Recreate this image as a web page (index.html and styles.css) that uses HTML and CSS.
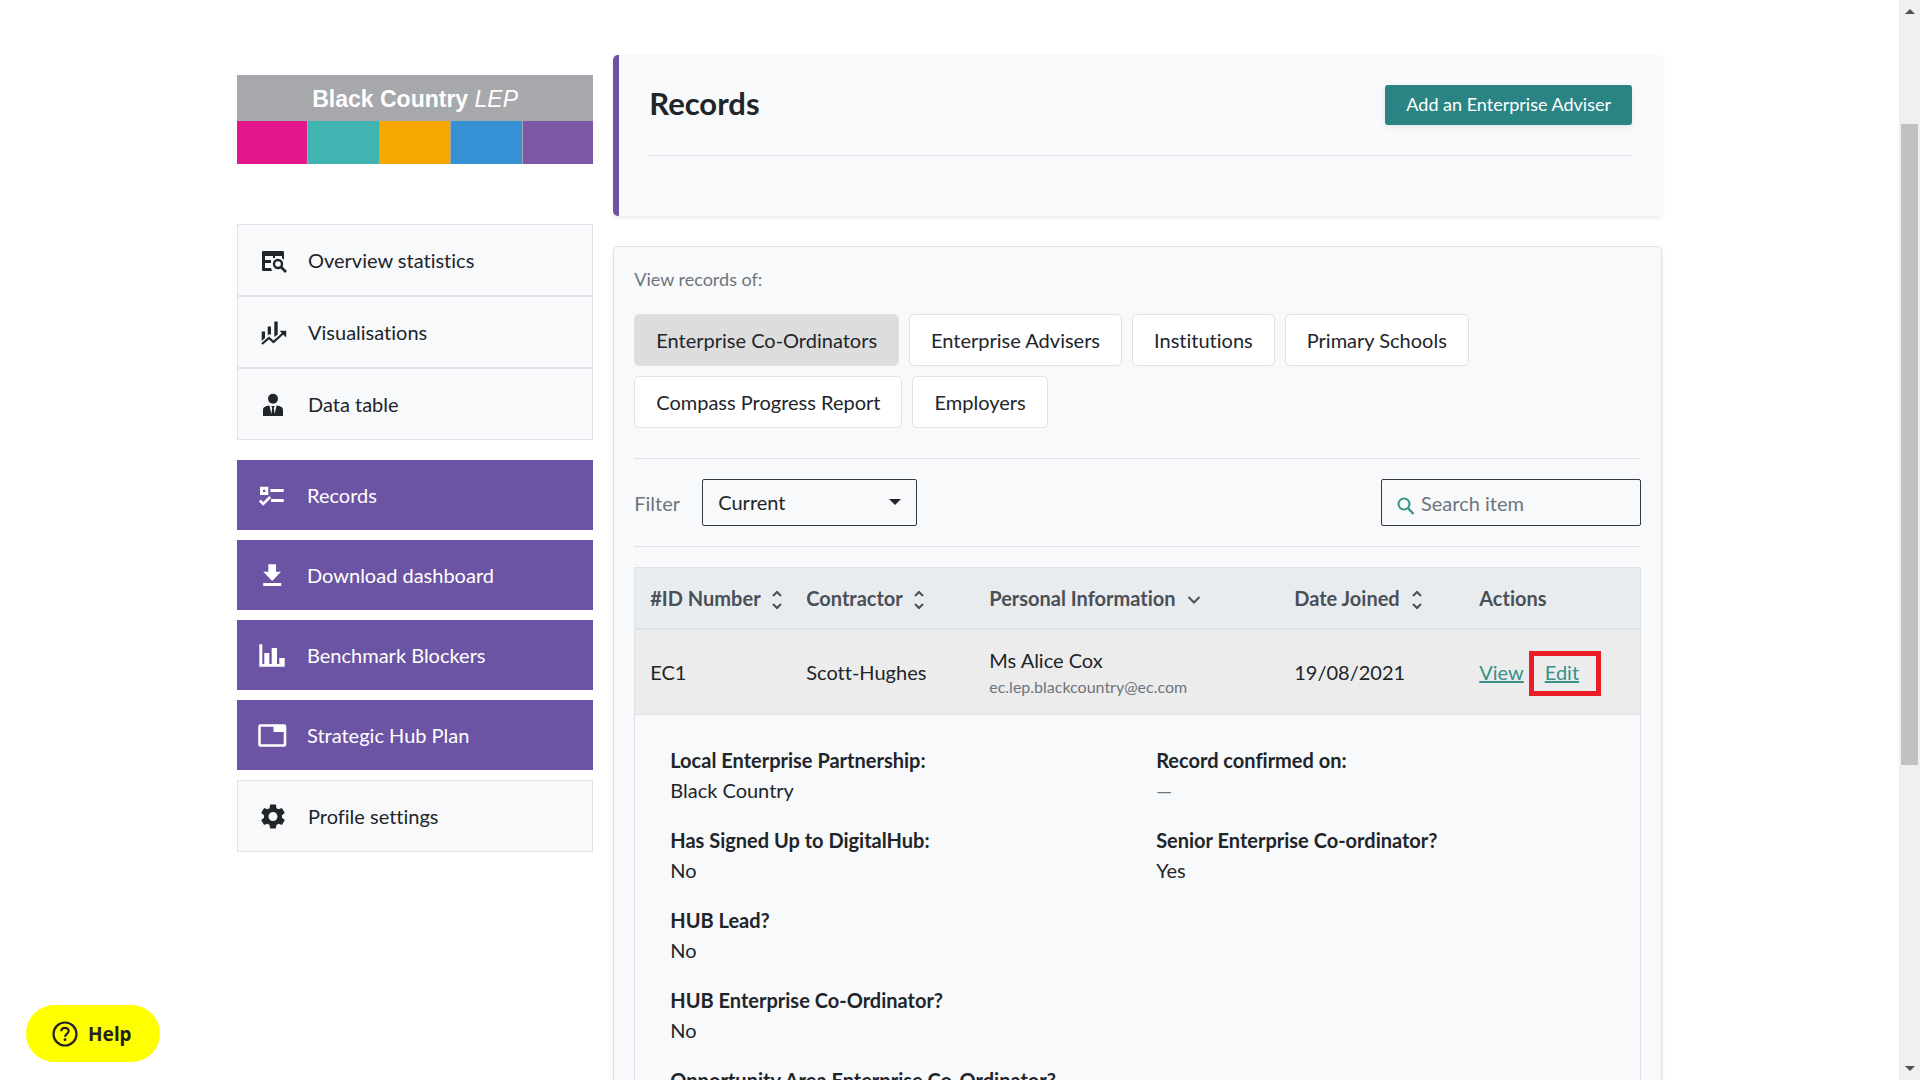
FILE: index.html
```html
<!DOCTYPE html>
<html lang="en">
<head>
  <meta charset="utf-8">
  <title>Records</title>
  <link rel="stylesheet" href="styles.css">
</head>
<body>
  <div class="viewport">
    <div class="container">

      <aside class="sidebar">
        <div class="logo">
          <div class="logo-name"><b>Black Country</b> <i>LEP</i></div>
          <div class="logo-colours">
            <span class="pink"></span>
            <span class="teal"></span>
            <span class="orange"></span>
            <span class="blue"></span>
            <span class="purple"></span>
          </div>
        </div>

        <nav>
          <div class="nav-group">
            <a class="nav-item" href="#">
              <svg class="icon" viewBox="0 0 28 28"><path fill="currentColor" d="M3 5h20a1 1 0 0 1 1 1v8l-2-2v-2h-7v2h-2v-2H5v4h6v3H5v5h6l1 3H3a1 1 0 0 1-1-1V6a1 1 0 0 1 1-1z"/><circle cx="18" cy="18" r="4" fill="none" stroke="currentColor" stroke-width="2.4"/><path stroke="currentColor" stroke-width="2.6" d="M21 21l5 5"/></svg>
              Overview statistics
            </a>
            <a class="nav-item" href="#">
              <svg class="icon" viewBox="0 0 28 28"><path fill="currentColor" d="M1.700 13.500H5V20l-3.300 3zM7.700 8.500H11V17l-1.800-1-1.500 1.500zM14.300 3.500h3.400v13L14.300 19zM19.500 12.800h6.700v6.700z"/><path fill="none" stroke="currentColor" stroke-width="2.200" d="M2 26l7-6 4.500 4L23.500 15"/></svg>
              Visualisations
            </a>
            <a class="nav-item" href="#">
              <svg class="icon" viewBox="0 0 28 28"><circle cx="13" cy="8.700" r="5" fill="currentColor"/><path fill="currentColor" d="M3 26v-6c0-2.500 2-4 6.500-4.500L11.300 24 12.200 18l-1-2h3.600l-1 2 .9 6 1.800-8.500C21 16 23 17.500 23 20v6z"/></svg>
              Data table
            </a>
          </div>

          <a class="nav-item primary" href="#">
            <svg class="icon" viewBox="0 0 28 28"><path fill="currentColor" fill-rule="evenodd" d="M1 5.700h8.300V14H1zM4 8.700V11h2.300V8.700zM11.500 8h13.200v3H11.500zM12 18h12.700v3H12z"/><path fill="none" stroke="currentColor" stroke-width="2.600" d="M.8 19.500L4.200 23l7-7"/></svg>
            Records
          </a>
          <a class="nav-item primary" href="#">
            <svg class="icon" viewBox="0 0 28 28"><path fill="currentColor" d="M9.300 3.300H17v7.400h5L13.200 20l-9-9.300h5.100zM4.200 22h18v3h-18z"/></svg>
            Download dashboard
          </a>
          <a class="nav-item primary" href="#">
            <svg class="icon" viewBox="0 0 28 28"><path fill="currentColor" d="M.3 3.300h3V23h2V12h5v11h2.400V7H18v16h2.300v-6h5.400v8.700H.3z"/></svg>
            Benchmark Blockers
          </a>
          <a class="nav-item primary" href="#">
            <svg class="icon" viewBox="0 0 28 28"><rect x="0.500" y="4.500" width="25.500" height="20" rx="1" fill="none" stroke="currentColor" stroke-width="2.600"/><path fill="currentColor" d="M14.500 4H26v7H14.500z"/></svg>
            Strategic Hub Plan
          </a>
          <a class="nav-item" href="#">
            <svg class="icon" viewBox="0 0 28 28"><path transform="translate(-2 -.5) scale(1.25)" fill="currentColor" d="M19.140 12.940c.04-.3.060-.61.060-.94 0-.32-.02-.64-.07-.94l2.030-1.580c.18-.14.23-.41.12-.61l-1.920-3.320c-.12-.22-.37-.29-.59-.22l-2.390.96c-.5-.38-1.030-.7-1.620-.94L14.400 2.810c-.04-.24-.24-.41-.48-.41h-3.840c-.24 0-.43.17-.47.41l-.36 2.540c-.59.24-1.130.57-1.620.94l-2.390-.96c-.22-.08-.47 0-.59.220L2.740 8.870c-.12.21-.08.47.12.610l2.030 1.580c-.05.3-.09.63-.09.940s.02.64.07.940l-2.030 1.580c-.18.14-.23.41-.12.610l1.920 3.320c.12.22.37.29.59.220l2.390-.96c.5.38 1.030.7 1.620.940l.36 2.540c.05.24.24.41.48.410h3.840c.24 0 .44-.17.47-.41l.36-2.540c.59-.24 1.130-.56 1.620-.94l2.390.96c.22.08.47 0 .59-.22l1.920-3.320c.12-.22.07-.47-.12-.61l-2.010-1.580zM12 15.600c-1.980 0-3.600-1.620-3.600-3.600s1.620-3.600 3.600-3.600 3.600 1.620 3.600 3.600-1.620 3.600-3.600 3.600z"/></svg>
            Profile settings
          </a>
        </nav>
      </aside>

      <main>
        <header class="page-header">
          <div class="page-title">
            <h1>Records</h1>
            <button type="button" class="btn-add">Add an Enterprise Adviser</button>
          </div>
        </header>

        <section class="panel">
          <p class="panel-label">View records of:</p>
          <div class="tabs">
            <button type="button" class="tab active">Enterprise Co-Ordinators</button>
            <button type="button" class="tab">Enterprise Advisers</button>
            <button type="button" class="tab">Institutions</button>
            <button type="button" class="tab">Primary Schools</button>
            <button type="button" class="tab">Compass Progress Report</button>
            <button type="button" class="tab">Employers</button>
          </div>

          <div class="toolbar">
            <label for="filter">Filter</label>
            <div class="select-wrap">
              <select id="filter">
                <option>Current</option>
                <option>Archived</option>
              </select>
            </div>
            <div class="search">
              <svg viewBox="0 0 18 18" aria-hidden="true"><circle cx="7" cy="7" r="5.500" fill="none" stroke="currentColor" stroke-width="2"/><path stroke="currentColor" stroke-width="2.200" d="M11 11l5.500 6"/></svg>
              <input type="search" placeholder="Search item" aria-label="Search item">
            </div>
          </div>

          <table class="records">
            <thead>
              <tr>
                <th class="col-id">#ID Number <svg class="sort" viewBox="0 0 10 20"><path d="M1 6l4-4 4 4M1 14l4 4 4-4"/></svg></th>
                <th class="col-contractor">Contractor <svg class="sort" viewBox="0 0 10 20"><path d="M1 6l4-4 4 4M1 14l4 4 4-4"/></svg></th>
                <th class="col-personal">Personal Information <svg class="sort down" viewBox="0 0 14 20"><path d="M1.500 7L7 12.500 12.500 7"/></svg></th>
                <th class="col-date">Date Joined <svg class="sort" viewBox="0 0 10 20"><path d="M1 6l4-4 4 4M1 14l4 4 4-4"/></svg></th>
                <th>Actions</th>
              </tr>
            </thead>
            <tbody>
              <tr class="record">
                <td>EC1</td>
                <td>Scott-Hughes</td>
                <td>Ms Alice Cox<small>ec.lep.blackcountry@ec.com</small></td>
                <td>19/08/2021</td>
                <td>
                  <div class="actions">
                    <a href="#">View</a>
                    <a href="#" class="highlight">Edit</a>
                  </div>
                </td>
              </tr>
              <tr>
                <td colspan="5" class="details">
                  <div class="details-columns">
                    <dl>
                      <dt>Local Enterprise Partnership:</dt>
                      <dd>Black Country</dd>
                      <dt>Has Signed Up to DigitalHub:</dt>
                      <dd>No</dd>
                      <dt>HUB Lead?</dt>
                      <dd>No</dd>
                      <dt>HUB Enterprise Co-Ordinator?</dt>
                      <dd>No</dd>
                      <dt>Opportunity Area Enterprise Co-Ordinator?</dt>
                      <dd>No</dd>
                    </dl>
                    <dl>
                      <dt>Record confirmed on:</dt>
                      <dd class="empty">—</dd>
                      <dt>Senior Enterprise Co-ordinator?</dt>
                      <dd>Yes</dd>
                    </dl>
                  </div>
                </td>
              </tr>
            </tbody>
          </table>
        </section>
      </main>

    </div>
  </div>

  <div class="scrollbar" aria-hidden="true">
    <span class="arrow up"></span>
    <div class="track"><div class="thumb"></div></div>
    <span class="arrow down"></span>
  </div>

  <button type="button" class="help">
    <svg viewBox="0 0 26 26"><circle cx="13" cy="13" r="11.500" fill="none" stroke="currentColor" stroke-width="2.200"/><path fill="none" stroke="currentColor" stroke-width="2.200" d="M9.300 10.300c0-4.700 7.400-4.500 7.400-.3 0 2.700-3.700 2.900-3.700 5.800"/><circle cx="13" cy="18.700" r="1.400" fill="currentColor"/></svg>
    Help
  </button>
</body>
</html>
```
FILE: styles.css
```css
* {
  box-sizing: border-box;
}

body {
  display: flex;
  height: 100vh;
  margin: 0;
  overflow: hidden;
  background: #fff;
  color: #212529;
  font-family: Lato, "Liberation Sans", sans-serif;
  font-size: 20px;
  font-variant-ligatures: none;
  line-height: 30px;
}

button,
input,
select {
  font: inherit;
  font-variant-ligatures: none;
  color: inherit;
}

.viewport {
  flex: 1;
  overflow: hidden;
}

.container {
  display: flex;
  gap: 20px;
  max-width: 1425px;
  margin: 0 auto;
  padding-top: 55px;
}

/* Sidebar */

.sidebar {
  flex: 0 0 25%;
  padding-top: 20px;
}

.logo {
  margin-bottom: 60px;
  background: #a7a8ac;
}

.logo-name {
  height: 46px;
  color: #fff;
  font-family: "Liberation Sans", Arial, sans-serif;
  font-size: 23px;
  line-height: 48px;
  text-align: center;
}

.logo-colours {
  display: flex;
  gap: 1px;
  height: 43px;
}

.logo-colours span {
  flex: 1;
}

.pink {
  background: #e4168b;
}

.teal {
  background: #40b4b0;
}

.orange {
  background: #f6a800;
}

.blue {
  background: #3591d3;
}

.purple {
  background: #7d58a6;
}

.nav-group {
  margin-bottom: 20px;
}

.nav-item {
  display: flex;
  align-items: center;
  gap: 20px;
  height: 72px;
  padding: 0 22px;
  border: 1px solid #dee2e6;
  background: #f8f9fb;
  color: #212529;
  text-decoration: none;
}

.nav-item.primary {
  height: 70px;
  margin-bottom: 10px;
  border: 0;
  background: #6b54a3;
  color: #fff;
}

.icon {
  width: 28px;
  height: 28px;
  overflow: visible;
}

/* Main column */

main {
  flex: 1;
  min-width: 0;
}

.page-header {
  margin-bottom: 30px;
  padding: 0 30px 60px;
  border-left: 6px solid #6b54a3;
  border-radius: 5px;
  background: #f8f9fb;
  box-shadow: 0 2px 5px rgba(0, 0, 0, 0.08);
}

.page-title {
  display: flex;
  align-items: flex-start;
  justify-content: space-between;
  padding: 30px 0;
  border-bottom: 1px solid #dee2e6;
}

h1 {
  margin: 0;
  font-size: 31px;
  font-weight: 700;
  line-height: 36px;
}

.btn-add {
  height: 40px;
  padding: 0 21px 2px;
  border: 0;
  border-radius: 3px;
  background: #2b8484;
  color: #fff;
  font-size: 18px;
  box-shadow: 0 2px 5px rgba(0, 0, 0, 0.08);
}

.panel {
  padding: 20px;
  border: 1px solid #dee2e6;
  border-radius: 5px;
  background: #f8f9fb;
  box-shadow: 0 2px 5px rgba(0, 0, 0, 0.08);
}

.panel-label {
  margin: 0 0 22px;
  color: #6c757d;
  font-size: 18px;
  line-height: 25px;
}

.tabs {
  display: flex;
  flex-wrap: wrap;
  gap: 10px;
  max-width: 900px;
  margin-bottom: 30px;
}

.tab {
  height: 52px;
  padding: 0 21px;
  border: 1px solid #dee2e6;
  border-radius: 5px;
  background: #fff;
}

.tab.active {
  background: #ddd;
}

.toolbar {
  display: flex;
  align-items: center;
  margin-bottom: 20px;
  padding: 20px 0;
  border-top: 1px solid #dee2e6;
  border-bottom: 1px solid #dee2e6;
  color: #6c757d;
}

.toolbar label {
  width: 48px;
}

.select-wrap {
  position: relative;
  margin-left: 20px;
  color: #212529;
}

.select-wrap::after {
  content: "";
  position: absolute;
  top: 20px;
  right: 16px;
  border: 6px solid transparent;
  border-top-color: #212529;
  border-bottom: 0;
  pointer-events: none;
}

select {
  display: block;
  width: 215px;
  height: 47px;
  padding: 0 15px 2px;
  border: 1px solid #343a40;
  border-radius: 2px;
  background: transparent;
  appearance: none;
}

.search {
  display: flex;
  align-items: center;
  gap: 6px;
  width: 260px;
  height: 47px;
  margin-left: auto;
  padding: 0 15px;
  border: 1px solid #343a40;
  border-radius: 2px;
}

.search svg {
  flex: none;
  width: 18px;
  height: 18px;
  margin-top: 6px;
  color: #36918a;
}

.search input {
  width: 100%;
  padding: 0;
  border: 0;
  outline: 0;
  background: transparent;
}

.search input::placeholder {
  color: #6c757d;
}

/* Records table */

.records {
  width: 100%;
  border: 1px solid #dee2e6;
  border-spacing: 0;
  table-layout: fixed;
}

.col-id {
  width: 156px;
}

.col-contractor {
  width: 183px;
}

.col-personal {
  width: 305px;
}

.col-date {
  width: 185px;
}

th {
  padding: 15px 0 15px 15px;
  border-bottom: 2px solid #dee2e6;
  background: #e9ecef;
  color: #495057;
  font-weight: 700;
  text-align: left;
  white-space: nowrap;
}

.sort {
  width: 10px;
  height: 20px;
  margin-left: 7px;
  fill: none;
  stroke: currentColor;
  stroke-width: 2;
  vertical-align: -4px;
}

.sort.down {
  width: 14px;
}

.record td {
  padding: 15px 0 16px 15px;
  border-bottom: 1px solid #dee2e6;
  background: #ececec;
}

small {
  display: block;
  color: #6c757d;
  font-size: 16px;
  line-height: 23px;
}

.actions {
  display: flex;
  gap: 21px;
}

.actions a {
  color: #36918a;
}

.highlight {
  position: relative;
}

.highlight::after {
  content: "";
  position: absolute;
  inset: -6px -22px -9px -16px;
  border: 5px solid #ea1d25;
}

.details {
  padding: 30px 0 30px 35px;
}

.details-columns {
  display: grid;
  grid-template-columns: 1fr 1fr;
  column-gap: 2px;
}

dl {
  margin: 0;
}

dt {
  font-weight: 700;
}

dd {
  margin: 0 0 20px;
}

.empty {
  color: #6c757d;
}

/* Window scrollbar */

.scrollbar {
  display: flex;
  flex-direction: column;
  flex: 0 0 21px;
  padding: 9px 2px;
  background: #f0f0f0;
}

.arrow {
  align-self: center;
  border: 5px solid transparent;
}

.arrow.up {
  border-top: 0;
  border-bottom-color: #505050;
}

.arrow.down {
  border-top-color: #505050;
  border-bottom: 0;
}

.track {
  flex: 1;
  padding: 110px 0;
}

.thumb {
  height: 77%;
  background: #c1c1c1;
}

.help {
  position: fixed;
  bottom: 18px;
  left: 26px;
  display: flex;
  align-items: center;
  gap: 10px;
  height: 57px;
  padding: 0 28px 0 26px;
  border: 0;
  border-radius: 29px;
  background: #ff0;
  color: #222;
  font-family: "Noto Sans", sans-serif;
  font-size: 19px;
  font-weight: 700;
}

.help svg {
  width: 26px;
  height: 26px;
}
```
